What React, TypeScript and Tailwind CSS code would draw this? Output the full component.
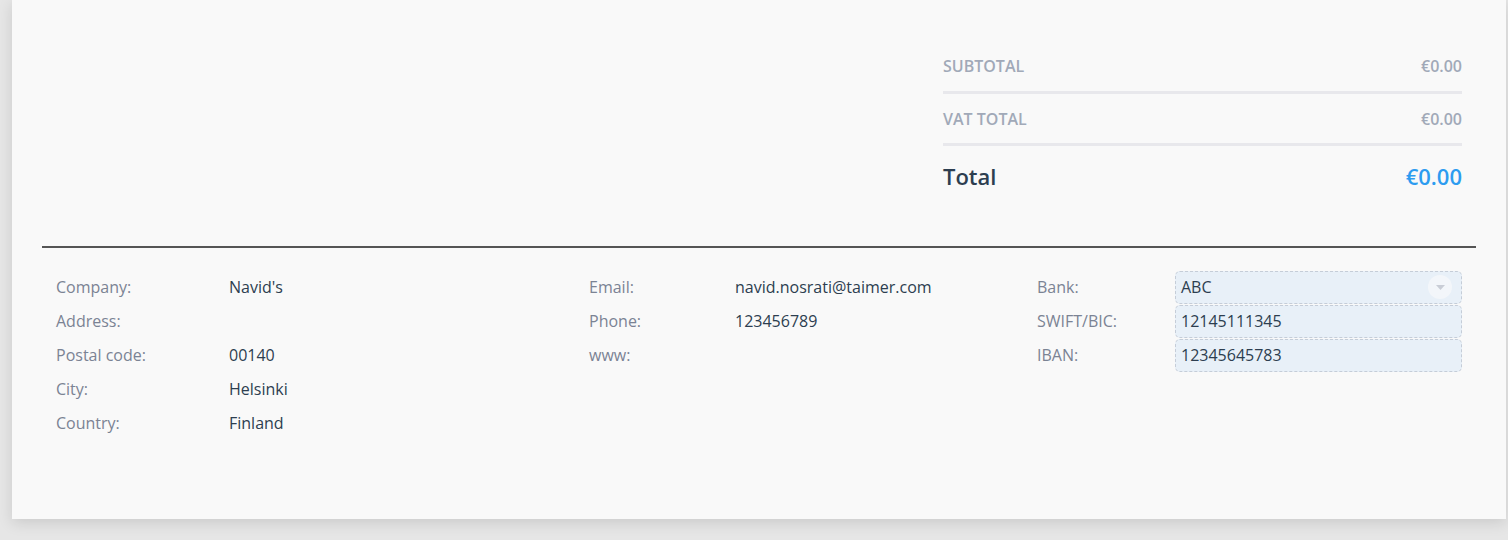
import React from 'react';

const font = { fontFamily: '"Open Sans", "Liberation Sans", sans-serif' };

const Row = ({ label, value, labelW }: { label: string; value?: string; labelW: string }) => (
  <div className="flex h-[34px] items-center">
    <span className={`${labelW} shrink-0 text-[#7b8394]`}>{label}</span>
    <span className="text-[#2d3e50]">{value}</span>
  </div>
);

const BankField = ({ label, value, select }: { label: string; value: string; select?: boolean }) => (
  <div className="flex h-[34px] items-center">
    <span className="w-[138px] shrink-0 text-[#7b8394]">{label}</span>
    <div className="relative flex h-[33px] flex-1 items-center rounded-[5px] border border-dashed border-[#c5cdd8] bg-[#e8f0f8] px-[5px] text-[#2d3e50]">
      {value}
      {select && (
        <div className="absolute right-[9px] top-1/2 flex h-[24px] w-[24px] -translate-y-1/2 items-center justify-center rounded-full bg-[#f3f6fa]">
          <svg width="9" height="5" viewBox="0 0 9 5">
            <path d="M0 0h9L4.5 5z" fill="#c9cdd6" />
          </svg>
        </div>
      )}
    </div>
  </div>
);

export default function App() {
  return (
    <div className="h-[540px] w-[1508px] overflow-hidden bg-[#e6e6e6]" style={font}>
      <div className="ml-[12px] h-[519px] w-[1494px] bg-[#f9f9f9] shadow-[0_4px_14px_rgba(0,0,0,0.12)]">
        {/* totals */}
        <div className="flex justify-end pr-[44px] pt-[40px]">
          <div className="w-[519px]">
            <div className="flex h-[54px] items-center justify-between border-b-[3px] border-[#e8e8ec] text-[16px] font-semibold text-[#a1a9b8]">
              <span>SUBTOTAL</span>
              <span>€0.00</span>
            </div>
            <div className="flex h-[52px] items-center justify-between border-b-[3px] border-[#e8e8ec] text-[16px] font-semibold text-[#a1a9b8]">
              <span>VAT TOTAL</span>
              <span>€0.00</span>
            </div>
            <div className="flex h-[60px] items-center justify-between text-[22px] font-semibold">
              <span className="text-[#2d3e50]">Total</span>
              <span className="text-[#2d9cf0]">€0.00</span>
            </div>
          </div>
        </div>

        <div className="mx-[30px] mt-[40px] h-[2px] bg-[#555555]" />

        {/* footer info */}
        <div className="flex px-[44px] pt-[22px] text-[16px]">
          <div className="w-[533px]">
            <Row label="Company:" value="Navid's" labelW="w-[173px]" />
            <Row label="Address:" labelW="w-[173px]" />
            <Row label="Postal code:" value="00140" labelW="w-[173px]" />
            <Row label="City:" value="Helsinki" labelW="w-[173px]" />
            <Row label="Country:" value="Finland" labelW="w-[173px]" />
          </div>
          <div className="w-[448px]">
            <Row label="Email:" value="navid.nosrati@taimer.com" labelW="w-[146px]" />
            <Row label="Phone:" value="123456789" labelW="w-[146px]" />
            <Row label="www:" labelW="w-[146px]" />
          </div>
          <div className="w-[425px]">
            <BankField label="Bank:" value="ABC" select />
            <BankField label="SWIFT/BIC:" value="12145111345" />
            <BankField label="IBAN:" value="12345645783" />
          </div>
        </div>
      </div>
    </div>
  );
}
